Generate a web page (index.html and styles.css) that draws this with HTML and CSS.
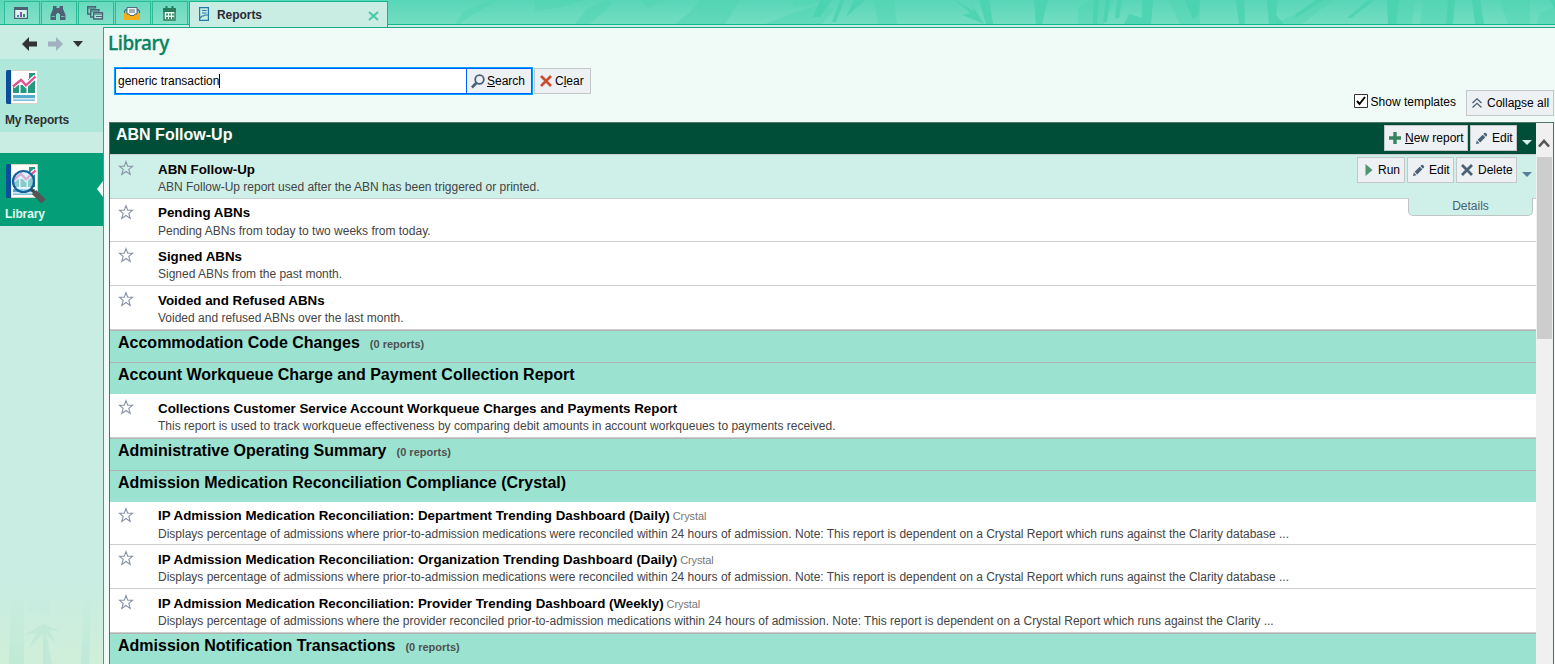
FILE: index.html
```html
<!DOCTYPE html>
<html lang="en">
<head>
<meta charset="utf-8">
<title>Reports</title>
<link rel="stylesheet" href="styles.css">
</head>
<body>
<svg class="defs" width="0" height="0">
  <symbol id="star" viewBox="0 0 16 16"><path d="M8 1.6 9.7 6.2 14.6 6.3 10.8 9.4 12.2 14.4 8 11.5 3.8 14.4 5.2 9.4 1.4 6.3 6.3 6.2Z" fill="none" stroke="#8793a3" stroke-width="1.1"/></symbol>
  <symbol id="pencil" viewBox="0 0 14 14"><path d="M1 13 2 9.2 4.8 12Z M2.8 8.4 8.3 2.9 11.1 5.7 5.6 11.2Z M9 2.2 10.2 1Q11 .4 11.8 1.2L12.8 2.2Q13.5 3 12.9 3.8L11.8 5Z" fill="#4b6175"/></symbol>
  <symbol id="book" viewBox="0 0 32 34"><path d="M5 .5H31.5V33.5H5Z" fill="#fff" stroke="#d9d4c6"/><path d="M0 1.5Q0 0 1.5 0H5V34H1.5Q0 34 0 32.5Z" fill="#0b4f9c"/><path d="M7 15H13V23H7ZM14.500 15H20.500V23H14.500ZM22 9H29V23H22ZM23 3H29V10H23Z" fill="#26987f"/><path d="M7 16.500 15 9.800 20 15.300 29.500 6.500" fill="none" stroke="#fff" stroke-width="4.600"/><path d="M7 16.500 15 9.800 20 15.300 29.500 6.500" fill="none" stroke="#e54e92" stroke-width="2.300"/><path d="M7 25H29V28.300H7ZM7 29.500H29V30.700H7Z" fill="#55acd0"/></symbol>
</svg>
<div class="app">
  <header class="tabbar">
    <svg class="bamboo" width="1167" height="24" viewBox="388 0 1167 24" aria-hidden="true">
      <g fill="#4dd4b2" opacity=".45">
        <path d="M455 24 464 11 491 0H500L470 16 460 24ZM535 0H585L560 7 535 11ZM700 0H740L725 24H675L690 12ZM765 24 790 14 824 4 834 9 822 24ZM790 0H820L812 5 795 6ZM874 0H894L897 24H878ZM1078 24V8L1090 0H1114L1104 24ZM1168 0H1200V24H1180ZM1274 24 1325 0H1333L1302 24ZM1391 0H1415L1412 24H1388ZM1423 0H1453L1450 24H1420ZM1500 0H1530V24H1508ZM1540 12 1555 8V24H1537Z"/>
        <path d="M575 24 588 8 608 0 612 4 590 24ZM640 0H668L648 7Z"/>
      </g>
      <g fill="#48d2b0" opacity=".8">
        <path d="M820 0H832L820 17H813ZM840 0H844L836 22H832ZM854 0H865L846 17ZM955 0 974 11 971 4 978 14 984 24 962 15 970 13ZM979 0H989L993 24H986ZM1034 0H1048L1042 24H1036ZM1094 0H1099L1097 24H1093ZM1106 0H1110L1107 22H1103ZM1117 0H1122L1119 18H1115ZM1142 0H1153L1151 24H1124L1129 14 1142 18ZM1185 0H1200L1198 15 1193 19ZM1236 0H1244L1245 24H1239ZM1267 0H1278L1276 15 1284 24H1269ZM1295 18 1324 0H1316L1296 14ZM1351 18 1375 0H1368L1347 18ZM1387 0H1399L1396 24H1388ZM1448 0H1455L1453 24H1446ZM1472 0H1480L1484 24H1475ZM1550 0H1555V10Z"/>
      </g>
    </svg>
    <nav class="tabs">
      <div class="tab"><svg width="14" height="12" viewBox="0 0 14 12"><path d="M.6.6H13.4V11.4H.6Z" fill="#d9f5ed" stroke="#4b6175" stroke-width="1.2"/><path d="M0 0H14V3H0Z" fill="#4b6175"/><path d="M3 8H5V10H3Z" fill="#2f87b8"/><path d="M6 5H8V10H6Z" fill="#8d4bb1"/><path d="M9 7H11V10H9Z" fill="#23966f"/></svg></div>
      <div class="tab"><svg width="16" height="14" viewBox="0 0 16 14"><path d="M3 0H6.5V2H9.5V0H13V3L15.5 9V14H10V8H9V7H7V8H6V14H.5V9L3 3Z" fill="#4b6175"/><path d="M1.5 10.5H5M11 10.5H14.5" stroke="#82cdbd" stroke-width=".8"/></svg></div>
      <div class="tab"><svg width="17" height="14" viewBox="0 0 17 14"><path d="M3.5 8H.7V.7H8.5V2.500M6.500 11H3.700V3.700H12V5.500" fill="none" stroke="#4b6175" stroke-width="1.3"/><path d="M1 2H8M4 5H12" stroke="#4b6175"/><path d="M6.7 6.7H15.5V13H6.7Z" fill="#a7e5d4" stroke="#4b6175" stroke-width="1.3"/><path d="M6 8H16M9 10.500H16" stroke="#4b6175"/></svg></div>
      <div class="tab"><svg width="16" height="13" viewBox="0 0 16 13"><path d="M.5 7V4L3 2M15.5 7V4L13 2" fill="none" stroke="#4b6175" stroke-width="1.2"/><path d="M0 6H5L6 8H10L11 6H16V13H0Z" fill="#f5ae18"/><path d="M3 .6H13V7H11L10 8.5H6L5 7H3Z" fill="#fff" stroke="#4b6175"/><path d="M5 3H11M5 5H11" stroke="#4b6175"/></svg></div>
      <div class="tab"><svg width="13" height="15" viewBox="0 0 13 15"><path d="M1 3H12V14H1Z" fill="#eafff7" stroke="#287c58" stroke-width="1.4"/><path d="M0 2H13V6H0ZM2.5 0H4.5V3H2.5ZM8.5 0H10.5V3H8.5Z" fill="#287c58"/><path d="M3 7.5H5V9.5H3ZM6 7.5H8V9.5H6ZM9 7.5H11V9.5H9ZM3 11H5V13H3ZM6 11H8V13H6ZM9 11H11V13H9Z" fill="#3d926d"/></svg></div>
      <div class="tab active">
        <svg width="11" height="15" viewBox="0 0 11 15"><path d="M.6.6H9.4V13.4H.6ZM3 3.5H7.5M3 6H7.5M.6 11.5 3 9H4.5L6 8H9.4" fill="none" stroke="#2479ac" stroke-width="1.2"/></svg>
        <span class="tab-name">Reports</span>
        <svg class="close" width="11" height="10" viewBox="0 0 11 10"><path d="M1 1 10 9M10 1 1 9" stroke="#46c9a6" stroke-width="2"/></svg>
      </div>
    </nav>
  </header>
  <div class="body">
    <aside class="sidebar">
      <div class="history">
        <svg width="15" height="14" viewBox="0 0 15 14"><path d="M0 7 7 0V4.5H15V9.5H7V14Z" fill="#333"/></svg>
        <svg width="15" height="14" viewBox="0 0 15 14"><path d="M15 7 8 0V4.5H0V9.5H8V14Z" fill="#a0b2c0"/></svg>
        <svg width="10" height="6" viewBox="0 0 10 6"><path d="M0 0H10L5 6Z" fill="#333"/></svg>
      </div>
      <div class="nav my"><svg width="32" height="34"><use href="#book"/></svg><span>My Reports</span></div>
      <div class="nav lib"><svg width="42" height="41" viewBox="0 0 42 41"><use href="#book" width="32" height="34"/><circle cx="17.500" cy="17.500" r="10.500" fill="#ccecff" fill-opacity=".6" stroke="#14609b" stroke-width="2.200"/><path d="M25 25 29 29" stroke="#444" stroke-width="3"/><path d="M28 28 37.500 37.500" stroke="#555" stroke-width="6"/></svg><span>Library</span><svg class="notch" width="6" height="16" viewBox="0 0 6 16"><path d="M6 0V16L0 8Z" fill="#f0faf7"/></svg></div>
      <svg class="grove" width="103" height="80" viewBox="0 0 103 80" aria-hidden="true"><defs><linearGradient id="fade" x1="0" x2="0" y1="0" y2="1"><stop offset="0" stop-color="#d0eedb" stop-opacity="0"/><stop offset="1" stop-color="#d0efd9"/></linearGradient><linearGradient id="stalk" x1="0" x2="0" y1="0" y2="1"><stop offset="0" stop-color="#a9dfd2" stop-opacity="0"/><stop offset="1" stop-color="#a9dfd2" stop-opacity=".4"/></linearGradient></defs><path d="M0 0H103V80H0Z" fill="url(#fade)"/><path d="M11 12H24V80H9ZM28 12H50V30L36 26 28 30ZM84 8H92L89 80H81Z" fill="url(#stalk)"/><path d="M24 51 43 40 60 47 49 46 56 60 46 49 52 80H43V49L28 65 37 49Z" fill="#a9dfd2" opacity=".35"/></svg>
    </aside>
    <main class="content">
      <h1>Library</h1>
      <div class="searchrow">
        <div class="searchbox">
          <div class="input">generic transaction<i class="caret"></i></div>
          <div class="search"><svg width="14" height="15" viewBox="0 0 14 15"><circle cx="8.500" cy="5.500" r="4.300" fill="none" stroke="#4b6175" stroke-width="1.800"/><path d="M5.300 9 1 13.500" stroke="#4b6175" stroke-width="2.600"/></svg><span><u>S</u>earch</span></div>
        </div>
        <div class="btn clear"><svg width="12" height="12" viewBox="0 0 12 12"><path d="M1 1 11 11M11 1 1 11" stroke="#c94f33" stroke-width="2.700"/></svg><span>C<u>l</u>ear</span></div>
      </div>
      <div class="options">
        <span class="check"><svg width="14" height="14" viewBox="0 0 14 14"><path d="M.5.5H13.500V13.500H.5Z" fill="#fff" stroke="#333"/><path d="M3 7 5.500 10 11 3" fill="none" stroke="#000" stroke-width="2"/></svg></span>
        <span class="show">Show templates</span>
        <div class="btn collapse"><svg width="10" height="10" viewBox="0 0 10 10"><path d="M.5 5 5 .8 9.500 5M.5 9.500 5 5.300 9.500 9.500" fill="none" stroke="#4b6175" stroke-width="1.300"/></svg><span>Colla<u>p</u>se all</span></div>
      </div>
      <div class="listframe">
        <div class="list">
          <div class="group current"><h2>ABN Follow-Up</h2>
            <div class="actions">
              <div class="btn new"><svg width="12" height="12" viewBox="0 0 12 12"><path d="M4.300 0H7.700V4.300H12V7.700H7.700V12H4.300V7.700H0V4.300H4.300Z" fill="#38845d"/></svg><span><u>N</u>ew report</span></div>
              <div class="btn edit"><svg width="13" height="13"><use href="#pencil"/></svg><span>Edit</span></div>
              <svg class="more" width="10" height="5" viewBox="0 0 10 5"><path d="M0 0H10L5 5Z" fill="#d5f0e8"/></svg>
            </div>
          </div>
          <div class="row selected"><svg class="star" width="16" height="16"><use href="#star"/></svg><div class="text"><h3>ABN Follow-Up</h3><p>ABN Follow-Up report used after the ABN has been triggered or printed.</p></div>
            <div class="actions">
              <div class="btn run"><svg width="8" height="12" viewBox="0 0 8 12"><path d="M.5 0 7.500 6 .5 12Z" fill="#4e9570"/></svg><span>Run</span></div>
              <div class="btn edit"><svg width="13" height="13"><use href="#pencil"/></svg><span>Edit</span></div>
              <div class="btn delete"><svg width="12" height="12" viewBox="0 0 12 12"><path d="M1 1 11 11M11 1 1 11" stroke="#4b6175" stroke-width="2.800"/></svg><span>Delete</span></div>
              <svg class="more" width="10" height="5" viewBox="0 0 10 5"><path d="M0 0H10L5 5Z" fill="#54809a"/></svg>
            </div>
            <div class="details">Details</div>
          </div>
          <div class="row short loose"><svg class="star" width="16" height="16"><use href="#star"/></svg><div class="text"><h3>Pending ABNs</h3><p>Pending ABNs from today to two weeks from today.</p></div></div>
          <div class="row"><svg class="star" width="16" height="16"><use href="#star"/></svg><div class="text"><h3>Signed ABNs</h3><p>Signed ABNs from the past month.</p></div></div>
          <div class="row"><svg class="star" width="16" height="16"><use href="#star"/></svg><div class="text"><h3>Voided and Refused ABNs</h3><p>Voided and refused ABNs over the last month.</p></div></div>
          <div class="group"><h2>Accommodation Code Changes</h2><small>(0 reports)</small></div>
          <div class="group"><h2>Account Workqueue Charge and Payment Collection Report</h2></div>
          <div class="row"><svg class="star" width="16" height="16"><use href="#star"/></svg><div class="text"><h3>Collections Customer Service Account Workqueue Charges and Payments Report</h3><p>This report is used to track workqueue effectiveness by comparing debit amounts in account workqueues to payments received.</p></div></div>
          <div class="group"><h2>Administrative Operating Summary</h2><small>(0 reports)</small></div>
          <div class="group"><h2>Admission Medication Reconciliation Compliance (Crystal)</h2></div>
          <div class="row short"><svg class="star" width="16" height="16"><use href="#star"/></svg><div class="text"><h3>IP Admission Medication Reconciliation: Department Trending Dashboard (Daily)<em>Crystal</em></h3><p>Displays percentage of admissions where prior-to-admission medications were reconciled within 24 hours of admission. Note: This report is dependent on a Crystal Report which runs against the Clarity database ...</p></div></div>
          <div class="row tight"><svg class="star" width="16" height="16"><use href="#star"/></svg><div class="text"><h3>IP Admission Medication Reconciliation: Organization Trending Dashboard (Daily)<em>Crystal</em></h3><p>Displays percentage of admissions where prior-to-admission medications were reconciled within 24 hours of admission. Note: This report is dependent on a Crystal Report which runs against the Clarity database ...</p></div></div>
          <div class="row tight"><svg class="star" width="16" height="16"><use href="#star"/></svg><div class="text"><h3>IP Admission Medication Reconciliation: Provider Trending Dashboard (Weekly)<em>Crystal</em></h3><p>Displays percentage of admissions where the provider reconciled prior-to-admission medications within 24 hours of admission. Note: This report is dependent on a Crystal Report which runs against the Clarity ...</p></div></div>
          <div class="group"><h2>Admission Notification Transactions</h2><small>(0 reports)</small></div>
        </div>
        <div class="scrollbar"><svg width="12" height="9" viewBox="0 0 12 9"><path d="M1 7.500 6 2 11 7.500" fill="none" stroke="#555" stroke-width="2.600"/></svg><div class="thumb"></div></div>
      </div>
    </main>
  </div>
</div>
</body>
</html>
```
FILE: styles.css
```css
* { box-sizing: border-box; }
body { margin: 0; font: 12px "Liberation Sans", Arial, sans-serif; color: #000; }
h1, h2, h3, p { margin: 0; }
svg { display: block; flex: none; }
.defs { position: absolute; }
.app { width: 1555px; height: 664px; overflow: hidden; display: flex; flex-direction: column; background: #c9ede2; }
.tabbar { position: relative; flex: none; height: 25px; border-bottom: 1px solid #12b78d; background: linear-gradient(#59d6b7, #73ddc2); }
.bamboo { position: absolute; top: 0; right: 0; }
.tabs { position: relative; display: flex; gap: 1px; padding: 1px 0 0 4px; }
.tab { width: 36px; height: 23px; border: 1px solid #2abd98; border-bottom: 0; display: flex; justify-content: center; align-items: center; padding-right: 2px; background: linear-gradient(#69dabe, #84e0c9); }
.tab.active { width: 199px; height: 26px; margin-bottom: -2px; border-color: #12b78d; background: #c9ede2; justify-content: flex-start; padding: 0 8px 1px 9px; }
.tab-name { margin-left: 7px; padding-top: 2px; font-weight: bold; color: #2b2b3a; letter-spacing: -.05px; }
.close { margin-left: auto; margin-top: 4px; }
.body { flex: 1; display: flex; min-height: 0; padding-top: 2px; }
.sidebar { position: relative; width: 103px; flex: none; margin-top: -2px; }
.history { height: 34px; display: flex; align-items: center; padding: 3px 0 0 22px; gap: 11px; }
.history svg:last-child { margin-left: -1px; }
.nav { position: relative; height: 73px; padding: 11px 0 0 5px; font-weight: bold; letter-spacing: -.13px; display: flex; flex-direction: column; color: #2f3033; }
.nav svg:first-child { margin-left: 1px; }
.my { background: #afe7da; }
.my span { margin-top: 9px; }
.lib { margin-top: 21px; background: #049e78; color: #e3f9f1; }
.lib span { margin-top: 2px; }
.notch { position: absolute; right: 0; top: 28px; }
.grove { position: absolute; left: 0; bottom: 0; }
.content { flex: 1; min-width: 0; border-left: 1px solid #12b78d; border-top: 1px solid #1da885; background: #f0faf7; display: flex; flex-direction: column; }
h1 { height: 39px; padding: 2px 0 0 4px; font: 500 19px/27px "Noto Sans", sans-serif; letter-spacing: -.4px; color: #07825f; -webkit-text-stroke: .3px #07825f; }
.searchrow { display: flex; padding-left: 10px; height: 28px; gap: 1px; }
.searchbox { display: flex; width: 419px; height: 28px; border: 1px solid #00a2ff; background: #005fff; padding: 1px; gap: 1px; }
.input { width: 350px; flex: none; background: #fff; display: flex; align-items: center; padding-left: 2px; }
.caret { width: 1px; height: 14px; background: #000; }
.search { flex: 1; background: #edf1f4; display: flex; align-items: center; padding-left: 4px; gap: 2px; }
.btn { height: 27px; border: 1px solid #c3c7c8; background: #edf1f4; color: #000; display: flex; align-items: center; padding: 0 4px; gap: 4px; white-space: nowrap; }
.clear { width: 57px; margin-top: 1px; height: 26px; padding-left: 5px; gap: 3px; }
.options { display: flex; justify-content: flex-end; height: 27px; margin-top: -5px; padding-right: 1px; }
.check { margin: 4px 3px 0 0; }
.show { padding-top: 5px; margin-right: 10px; }
.collapse { width: 88px; height: 26px; padding-left: 5px; gap: 5px; }
.listframe { flex: 1; min-height: 0; margin: 5px 1px 0 5px; display: flex; border: solid #4f7568; border-width: 1px 1px 0; }
.list { width: 1426px; flex: none; background: #fff; }
.group { height: 32px; border-top: 1px solid #b0b3b2; background: #9be3d0; display: flex; padding: 2px 0 0 8px; }
.group h2 { font-size: 16px; line-height: 20px; }
.group small { margin: 5px 0 0 10px; font-size: 11px; line-height: 12px; font-weight: bold; color: #505050; }
.group.current { border-top: 0; border-bottom: 1px solid #c8cccb; background: #004d38; color: #fff; padding: 2px 4px 0 6px; }
.actions { margin-left: auto; display: flex; gap: 2px; }
.current .btn { height: 26px; }
.btn.new { width: 84px; }
.btn.edit { width: 47px; }
.btn.run { width: 48px; padding-left: 7px; gap: 5px; }
.btn.delete { width: 61px; gap: 5px; }
.more { margin: 15px 0 0 3px; }
.row { position: relative; height: 44px; border-bottom: 1px solid #cdcdcd; display: flex; padding: 6px 0 0 8px; }
.row.short { height: 43px; padding-top: 5px; }
.row h3 { display: flex; font-size: 13.33px; line-height: 18px; white-space: nowrap; }
.row h3 em { font: 11px/19px "Liberation Sans", Arial, sans-serif; letter-spacing: -.1px; color: #777; margin-left: 3px; }
.row p { line-height: 17px; color: #444; white-space: nowrap; }
.star { margin-top: -1px; }
.short .star { margin-top: 0; }
.loose p { margin-top: 1px; }
.tight p { margin-top: -1px; }
.text { margin-left: 24px; }
.selected { background: #cef0e8; padding-right: 4px; }
.selected .actions { margin-top: -4px; }
.selected .btn { height: 26px; }
.details { position: absolute; z-index: 1; right: 3px; top: 43px; width: 125px; height: 18px; border: 1px solid #bfc5c3; border-top: 0; border-radius: 0 0 5px 5px; background: #cef0e8; color: #4b6175; text-align: center; line-height: 17px; }
.scrollbar { flex: 1; background: #f0f0f0; padding: 16px 0 0 1px; }
.scrollbar svg { margin-left: 1px; }
.thumb { margin-top: 9px; width: 15px; height: 182px; background: #cdcdcd; }
```
